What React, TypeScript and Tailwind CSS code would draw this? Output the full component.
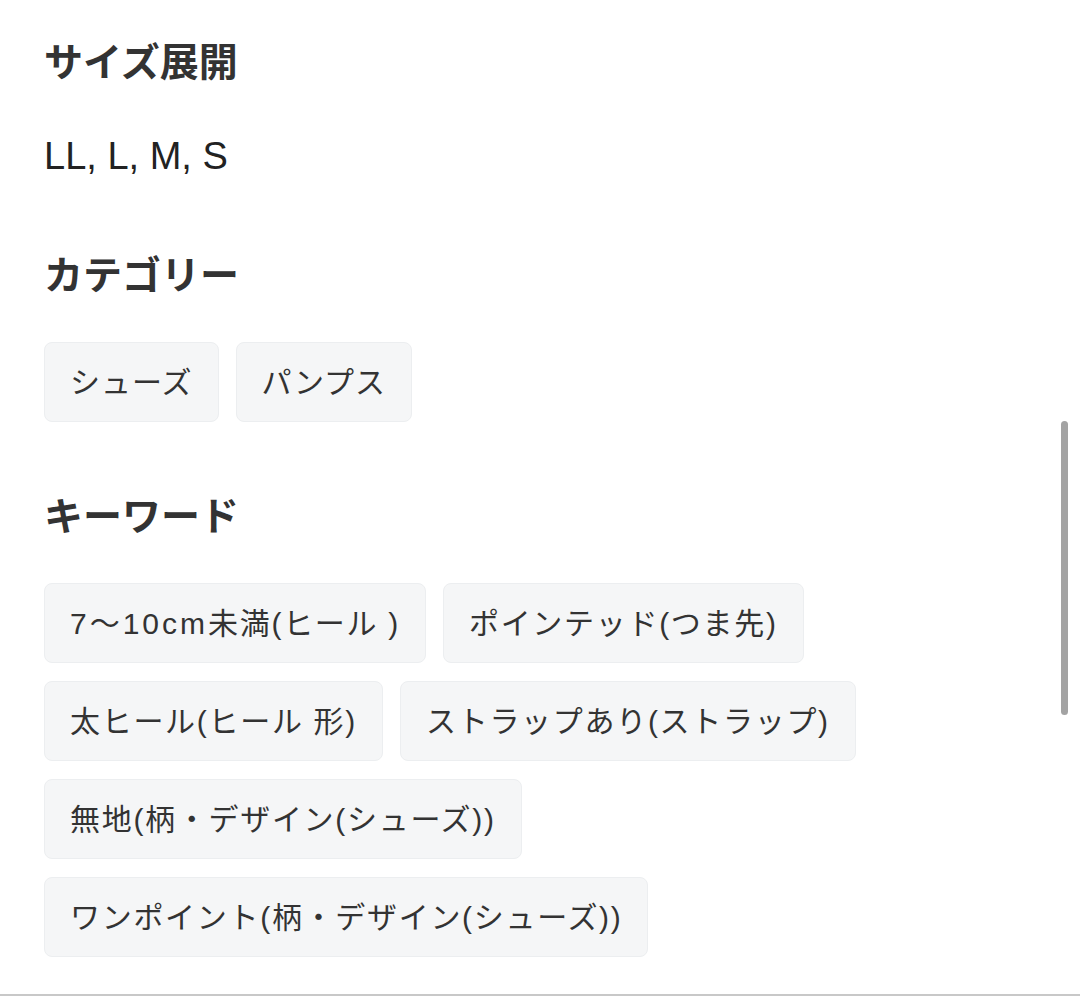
import React from "react";

const font = { fontFamily: '"Liberation Sans", "Noto Sans CJK JP", sans-serif' };

function Tag({ children, tight = false }: { children: React.ReactNode; tight?: boolean }) {
  return (
    <div
      className={
        "h-[80px] px-[25px] flex items-center rounded-[8px] bg-[#f5f6f7] border border-[#eceef0] text-[30px] text-[#333333] whitespace-nowrap " +
        (tight ? "tracking-[1px]" : "tracking-[1.7px]")
      }
    >
      {children}
    </div>
  );
}

function Heading({ children }: { children: React.ReactNode }) {
  return <h2 className="text-[39px] leading-[44px] font-bold text-[#333333]">{children}</h2>;
}

export default function App() {
  return (
    <div className="relative w-[1080px] h-[996px] bg-white overflow-hidden" style={font}>
      <div className="pl-[44px] pt-[41px] flex flex-col">
        <Heading>サイズ展開</Heading>
        <p className="mt-[49px] text-[38px] leading-[44px] text-[#222222]">LL, L, M, S</p>
        <div className="mt-[76px]">
          <Heading>カテゴリー</Heading>
        </div>
        <div className="mt-[44px] flex gap-[17px]">
          <Tag tight>シューズ</Tag>
          <Tag tight>パンプス</Tag>
        </div>
        <div className="mt-[73px]">
          <Heading>キーワード</Heading>
        </div>
        <div className="mt-[44px] flex flex-col gap-[18px]">
          <div className="flex gap-[17px]">
            <Tag>
              <span className="tracking-[3px]">7〜10cm</span>未満(ヒール<span className="ml-[10px]">)</span>
            </Tag>
            <Tag>ポインテッド(つま先)</Tag>
          </div>
          <div className="flex gap-[17px]">
            <Tag>太ヒール(ヒール 形)</Tag>
            <Tag>ストラップあり(ストラップ)</Tag>
          </div>
          <div className="flex gap-[17px]">
            <Tag>無地(柄・デザイン(シューズ))</Tag>
          </div>
          <div className="flex gap-[17px]">
            <Tag>ワンポイント(柄・デザイン(シューズ))</Tag>
          </div>
        </div>
      </div>
      <div className="absolute left-[1061px] top-[421px] w-[7px] h-[294px] rounded-full bg-[#a3a3a3]" />
      <div className="absolute left-0 bottom-0 w-full h-[2px] bg-[#c8c8c8]" />
    </div>
  );
}
